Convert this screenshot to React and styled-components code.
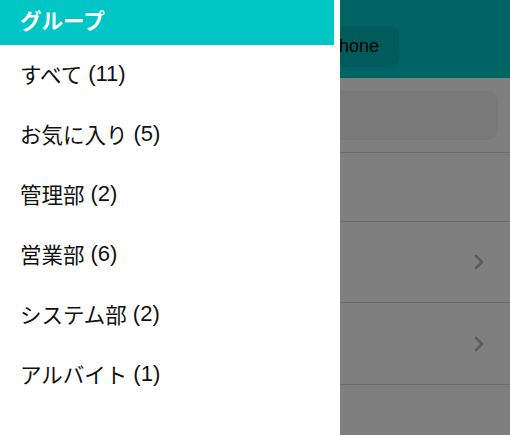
import React from "react";
import styled, { createGlobalStyle } from "styled-components";
import { ChevronRight } from "lucide-react";

const GlobalStyle = createGlobalStyle`
  html, body {
    margin: 0;
    padding: 0;
    height: 435px;
    overflow: hidden;
    background: #fff;
    font-family: "Liberation Sans", "Noto Sans CJK JP", sans-serif;
  }
`;

const Screen = styled.div`
  position: relative;
  width: 510px;
  height: 435px;
  overflow: hidden;
`;

const Page = styled.div`
  display: flex;
  flex-direction: column;
  height: 100%;
  background: #fff;

  & > * {
    flex-shrink: 0;
  }
`;

const Header = styled.div`
  height: 78px;
  box-sizing: border-box;
  padding: 26px 0 0 303px;
  background: #00c8c4;
`;

const DeviceButton = styled.div`
  display: inline-flex;
  align-items: center;
  height: 41px;
  padding: 0 20px;
  box-sizing: border-box;
  border-radius: 9px;
  background: #00b6b4;
  color: #000;
  font-size: 18px;
`;

const SearchWrap = styled.div`
  padding: 13px 12px 12px 12px;
  border-bottom: 1px solid #d6d6d6;
`;

const SearchBox = styled.div`
  height: 49px;
  border-radius: 10px;
  background: #f3f3f3;
`;

const Row = styled.div`
  display: flex;
  align-items: center;
  justify-content: flex-end;
  height: ${(p) => p.h}px;
  padding-right: 19px;
  box-sizing: border-box;
  border-bottom: 1px solid ${(p) => (p.faint ? "#ececec" : "#d6d6d6")};
  color: #b8b8b8;
`;

const Overlay = styled.div`
  position: absolute;
  inset: 0;
  background: rgba(0, 0, 0, 0.5);
`;

const Drawer = styled.div`
  position: absolute;
  top: 0;
  left: 0;
  width: 340px;
  height: 100%;
  background: #fff;
`;

const DrawerHeader = styled.div`
  width: 334px;
  height: 45px;
  display: flex;
  align-items: center;
  padding: 0 0 6px 20px;
  box-sizing: border-box;
  background: #00c6c6;
  color: #fff;
  font-size: 21.5px;
  font-weight: bold;
`;

const GroupList = styled.ul`
  margin: 0;
  padding: 0;
  list-style: none;
`;

const GroupItem = styled.li`
  height: 60px;
  display: flex;
  align-items: center;
  padding: 0 0 3px 20px;
  box-sizing: border-box;
  font-size: 21.5px;
  color: #111;
`;

const Count = styled.span`
  margin-left: 6px;
  font-size: 22px;
`;

const groups = [
  { name: "すべて", count: 11 },
  { name: "お気に入り", count: 5 },
  { name: "管理部", count: 2 },
  { name: "営業部", count: 6 },
  { name: "システム部", count: 2 },
  { name: "アルバイト", count: 1 },
];

export default function App() {
  return (
    <Screen>
      <GlobalStyle />
      <Page>
        <Header>
          <DeviceButton>iPhone</DeviceButton>
        </Header>
        <SearchWrap>
          <SearchBox />
        </SearchWrap>
        <Row h={69} />
        <Row h={81}>
          <ChevronRight size={24} strokeWidth={2.6} />
        </Row>
        <Row h={82}>
          <ChevronRight size={24} strokeWidth={2.6} />
        </Row>
        <Row h={82} faint />
      </Page>
      <Overlay />
      <Drawer>
        <DrawerHeader>グループ</DrawerHeader>
        <GroupList>
          {groups.map((g) => (
            <GroupItem key={g.name}>
              {g.name}
              <Count>({g.count})</Count>
            </GroupItem>
          ))}
        </GroupList>
      </Drawer>
    </Screen>
  );
}
